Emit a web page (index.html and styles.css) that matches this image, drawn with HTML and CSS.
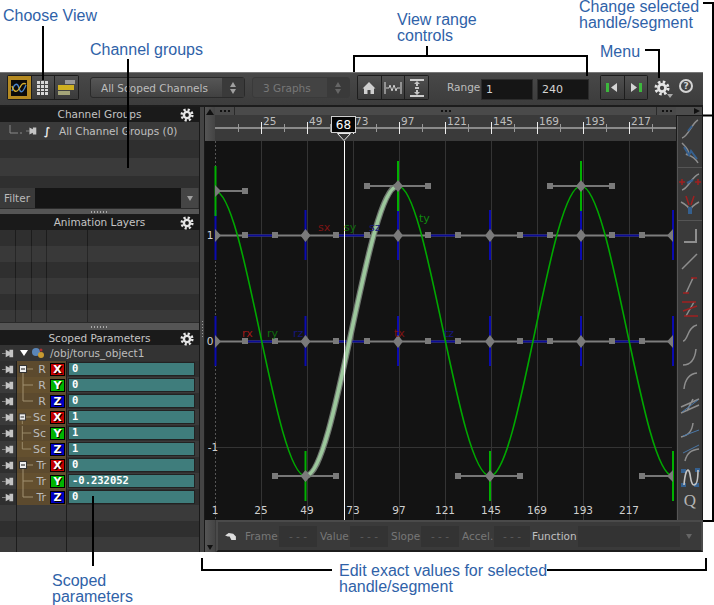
FILE: index.html
```html
<!DOCTYPE html>
<html lang="en">
<head>
<meta charset="utf-8">
<title>Animation Editor</title>
<link rel="stylesheet" href="styles.css">
</head>
<body>
<svg class="defs" width="0" height="0" aria-hidden="true">
  <defs>
    <symbol id="gear" viewBox="0 0 20 20">
      <circle cx="10" cy="10" r="7.600" fill="none" stroke="#e6e6e6" stroke-width="3.600" stroke-dasharray="3.100 2.870"/>
      <circle cx="10" cy="10" r="4.400" fill="none" stroke="#e6e6e6" stroke-width="3.400"/>
    </symbol>
    <symbol id="pin" viewBox="0 0 14 14">
      <path d="M0 7h4" stroke="#8a8a8a" stroke-width="1" fill="none"/>
      <path d="M4 3l4 2V3h4v8H8V9l-4 2z" fill="#c4c4c4"/>
    </symbol>
    <symbol id="t-minus" viewBox="0 0 18 16">
      <path d="M6 12v4M10 8h6" stroke="#a09070" fill="none"/>
      <rect x="2.500" y="4.500" width="7" height="7" fill="#eee" stroke="#333"/>
      <path d="M4 8h4" stroke="#111"/>
    </symbol>
    <symbol id="t-mid" viewBox="0 0 18 16">
      <path d="M6 0v16M6 8h10" stroke="#a09070" fill="none"/>
    </symbol>
    <symbol id="t-end" viewBox="0 0 18 16">
      <path d="M6 0v8h10" stroke="#a09070" fill="none"/>
    </symbol>
  </defs>
</svg>

<div class="stage">
  <div class="app">
    <div class="toolbar">
      <div class="btn-group first">
        <span class="tbtn active"><svg width="16" height="16" viewBox="0 0 16 16"><rect width="16" height="16" fill="#0b0b0b"/><path d="M1 11C4 1 7 4 8 8s3 7 7-3" fill="none" stroke="#4a86d0" stroke-width="1.300"/><path d="M1 6c2 7 5 6 7 3s3-7 7-5" fill="none" stroke="#d8b030" stroke-width="1.300"/></svg></span>
        <span class="tbtn"><svg width="14" height="14" viewBox="0 0 14 14"><path d="M1 0h3v3H1zM5 0h3v3H5zM9 0h3v3H9zM1 4h3v3H1zM5 4h3v3H5zM9 4h3v3H9zM1 8h3v2H1zM5 8h3v2H5zM9 8h3v2H9zM1 11h3v3H1zM5 11h3v3H5zM9 11h3v3H9z" fill="#d8d8d8"/></svg></span>
        <span class="tbtn"><svg width="17" height="16" viewBox="0 0 17 16"><rect x="7" y="0" width="10" height="4" fill="#999"/><rect x="0" y="5" width="16" height="5" fill="#cfb020"/><rect x="0" y="11" width="12" height="4" fill="#a4a478"/></svg></span>
      </div>
      <div class="combo main-combo"><span class="combo-text">All Scoped Channels</span><span class="combo-arrows"><i class="up"></i><i class="down"></i></span></div>
      <div class="combo dim-combo"><span class="combo-text">3 Graphs</span><span class="combo-arrows"><i class="up"></i><i class="down"></i></span></div>
      <div class="btn-group range-group">
        <span class="tbtn"><svg width="14" height="14" viewBox="0 0 14 14"><path d="M7 1l6.500 6.500H12V13H8.500V9h-3v4H2V7.500H.5z" fill="#cfcfcf"/></svg></span>
        <span class="tbtn"><svg width="20" height="16" viewBox="0 0 20 16"><path d="M2 2v12M18 2v12" stroke="#ddd"/><path d="M3 8h3l1-3 2 6 2-6 2 6 1-3h3" fill="none" stroke="#ccc"/></svg></span>
        <span class="tbtn"><svg width="16" height="20" viewBox="0 0 16 20"><path d="M1 2h14M1 18h14" stroke="#ccc" stroke-width="2"/><path d="M8 3l-3 3h2v2h2V6h2zM8 17l-3-3h2v-2h2v2h2zM6 9h4v2H6z" fill="#c4c4c4"/></svg></span>
      </div>
      <span class="range-label">Range</span>
      <span class="num-field">1</span>
      <span class="num-field">240</span>
      <div class="btn-group step-group">
        <span class="tbtn"><svg width="12" height="9" viewBox="0 0 12 9"><rect x="0" y="0" width="3" height="9" fill="#3cb83c"/><path d="M11 0v9L5 4.500z" fill="#d4d4d4"/></svg></span>
        <span class="tbtn"><svg width="12" height="9" viewBox="0 0 12 9"><path d="M1 0v9l6-4.500z" fill="#d4d4d4"/><rect x="9" y="0" width="3" height="9" fill="#3cb83c"/></svg></span>
      </div>
      <svg class="menu-gear" width="16" height="16"><use href="#gear"/></svg>
      <i class="menu-caret"></i>
      <span class="help">?</span>
    </div>

    <div class="workspace">
      <div class="left">
        <div class="phead"><span>Channel Groups</span><svg class="hgear" width="14" height="14"><use href="#gear"/></svg></div>
        <div class="cg-row r-a">
          <svg class="cg-tree" width="16" height="12" viewBox="0 0 16 12"><path d="M2 0v8h8" stroke="#888" fill="none"/><path d="M12 8h2" stroke="#888"/></svg>
          <svg class="cg-pin" width="12" height="12"><use href="#pin"/></svg>
          <span class="cg-int">∫</span>
          <span class="cg-name">All Channel Groups (0)</span>
        </div>
        <div class="cg-row r-b"></div>
        <div class="cg-row r-a"></div>
        <div class="cg-row short r-b"></div>
        <div class="filter"><span class="filter-label">Filter</span><span class="filter-input"></span><span class="filter-btn"><i class="down"></i></span></div>
        <div class="divider"><span class="grip"></span></div>
        <div class="phead"><span>Animation Layers</span><svg class="hgear" width="14" height="14"><use href="#gear"/></svg></div>
        <div class="al-rows">
          <div class="al-row r-b"></div><div class="al-row r-a"></div><div class="al-row r-b"></div><div class="al-row r-a"></div><div class="al-row r-b"></div><div class="al-row r-a short"></div>
        </div>
        <div class="divider wide"><span class="grip"></span></div>
        <div class="phead low"><span>Scoped Parameters</span><svg class="hgear" width="14" height="14"><use href="#gear"/></svg></div>
        <div class="prow obj">
          <span class="ppin"><svg width="13" height="13"><use href="#pin"/></svg></span>
          <i class="tri"></i>
          <svg class="objicon" width="14" height="14" viewBox="0 0 14 14"><circle cx="5" cy="6" r="4" fill="#5a86b8"/><circle cx="10" cy="9" r="3" fill="#c89a30"/><circle cx="10" cy="4" r="1.500" fill="#b03030"/></svg>
          <span class="objpath">/obj/torus_object1</span>
        </div>
        <div class="prow r-b"><span class="ppin"><svg width="13" height="13"><use href="#pin"/></svg></span><span class="ptree"><svg width="18" height="16"><use href="#t-minus"/></svg><span class="plabel">R</span><b class="badge bx">X</b></span><span class="pcell"><span class="pfield">0</span></span></div>
        <div class="prow r-a"><span class="ppin"><svg width="13" height="13"><use href="#pin"/></svg></span><span class="ptree"><svg width="18" height="16"><use href="#t-mid"/></svg><span class="plabel">R</span><b class="badge by">Y</b></span><span class="pcell"><span class="pfield">0</span></span></div>
        <div class="prow r-b"><span class="ppin"><svg width="13" height="13"><use href="#pin"/></svg></span><span class="ptree"><svg width="18" height="16"><use href="#t-end"/></svg><span class="plabel">R</span><b class="badge bz">Z</b></span><span class="pcell"><span class="pfield">0</span></span></div>
        <div class="prow r-a"><span class="ppin"><svg width="13" height="13"><use href="#pin"/></svg></span><span class="ptree"><svg width="18" height="16"><use href="#t-minus"/></svg><span class="plabel">Sc</span><b class="badge bx">X</b></span><span class="pcell"><span class="pfield">1</span></span></div>
        <div class="prow r-b"><span class="ppin"><svg width="13" height="13"><use href="#pin"/></svg></span><span class="ptree"><svg width="18" height="16"><use href="#t-mid"/></svg><span class="plabel">Sc</span><b class="badge by">Y</b></span><span class="pcell"><span class="pfield">1</span></span></div>
        <div class="prow r-a"><span class="ppin"><svg width="13" height="13"><use href="#pin"/></svg></span><span class="ptree"><svg width="18" height="16"><use href="#t-end"/></svg><span class="plabel">Sc</span><b class="badge bz">Z</b></span><span class="pcell"><span class="pfield">1</span></span></div>
        <div class="prow r-b"><span class="ppin"><svg width="13" height="13"><use href="#pin"/></svg></span><span class="ptree"><svg width="18" height="16"><use href="#t-minus"/></svg><span class="plabel">Tr</span><b class="badge bx">X</b></span><span class="pcell"><span class="pfield">0</span></span></div>
        <div class="prow r-a"><span class="ppin"><svg width="13" height="13"><use href="#pin"/></svg></span><span class="ptree"><svg width="18" height="16"><use href="#t-mid"/></svg><span class="plabel">Tr</span><b class="badge by">Y</b></span><span class="pcell"><span class="pfield">-0.232052</span></span></div>
        <div class="prow r-b"><span class="ppin"><svg width="13" height="13"><use href="#pin"/></svg></span><span class="ptree"><svg width="18" height="16"><use href="#t-end"/></svg><span class="plabel">Tr</span><b class="badge bz">Z</b></span><span class="pcell"><span class="pfield">0</span></span></div>
        <div class="prow empty r-a"><span class="ppin"></span><span class="ptree blank"></span></div>
        <div class="prow empty r-b"><span class="ppin"></span><span class="ptree blank"></span></div>
        <div class="prow empty tail r-a"><span class="ppin"></span><span class="ptree blank"></span></div>
      </div>

      <div class="splitter"><span class="vgrip"></span></div>

      <div class="graph">
        <div class="graph-upper">
          <div class="canvas">
            <div class="canvas-top">
              <div class="vthumb top"><i class="tri-up"></i></div>
              <div class="ruler-col">
                <div class="hscroll"><span class="hs-start"><span class="grip short"></span></span><span class="hs-mid"><span class="grip short"></span></span><span class="hs-end"><span class="grip short"></span></span></div>
                <svg class="ruler" width="461" height="26" viewBox="215 115 461 26">
                  <rect x="215" y="115" width="461" height="26" fill="#3a3a3a"/>
                  <path d="M215 128H676" stroke="#8a8a8a" stroke-width="2"/>
                  <path class="minor" d="M238.500 124v8M284.500 124v8M330.500 124v8M376.500 124v8M422.500 124v8M468.500 124v8M514.500 124v8M560.500 124v8M606.500 124v8M652.500 124v8"/>
                  <path class="major" d="M261.500 122v12M307.500 122v12M353.500 122v12M399.500 122v12M445.500 122v12M491.500 122v12M537.500 122v12M583.500 122v12M629.500 122v12"/>
                  <g class="ruler-nums">
                    <text x="263" y="125">25</text><text x="309" y="125">49</text><text x="355" y="125">73</text><text x="401" y="125">97</text><text x="447" y="125">121</text><text x="493" y="125">145</text><text x="539" y="125">169</text><text x="585" y="125">193</text><text x="631" y="125">217</text>
                  </g>
                  <rect x="331.500" y="116.500" width="24" height="16" fill="#050505" stroke="#cfcfcf"/>
                  <text class="flag-num" x="343.500" y="129" text-anchor="middle">68</text>
                  <path d="M337.500 133.500h13l-6.500 7z" fill="#333" stroke="#e8e8e8"/>
                </svg>
              </div>
            </div>
            <svg class="plot" width="471" height="379" viewBox="205 141 471 379">
              <rect x="205" y="141" width="471" height="379" fill="#131313"/>
              <path class="grid" d="M261.500 141V520M307.500 141V520M353.500 141V520M399.500 141V520M445.500 141V520M491.500 141V520M537.500 141V520M583.500 141V520M629.500 141V520M215 447.500H672"/>
              <path class="axis" d="M215.500 141V520"/>
              <path class="flat" d="M215 235.500H672M215 341.500H672"/>
              <path class="blue-seg" d="M245 235.500H275M336 235.500H367M428 235.500H458M520 235.500H550M612 235.500H642M245 341.500H275M336 341.500H367M428 341.500H458M520 341.500H550M612 341.500H642"/>
              <path class="blue-v" d="M215.500 210V260M305.500 210V260M398 210V260M490 210V260M581 210V260M673 210V260M215.500 316V366M305.500 316V366M398 316V366M490 316V366M581 316V366M673 316V366"/>
              <path class="green-v" d="M215.500 166V216M398 161V211M581 161V211M305.500 451V501M490 451V501M673 451V501"/>
              <path class="handle-line" d="M215 191H245M367 186H428M550 186H612M275 476H336M458 476H520M642 476H672"/>
              <path class="curve" d="M215 191C245 191 275 476 305.500 476C336 476 367 186 398 186C428 186 458 476 490 476C520 476 550 186 581 186C612 186 642 476 673 476"/>
              <path class="active-edge" d="M305.500 476C336 476 367 186 398 186"/>
              <path class="active-core" d="M305.500 476C336 476 367 186 398 186"/>
              <path class="now" d="M344.500 141V520"/>
              <g class="squares">
                <rect x="242" y="232" width="6" height="6"/><rect x="272" y="232" width="6" height="6"/><rect x="333" y="232" width="6" height="6"/><rect x="364" y="232" width="6" height="6"/><rect x="425" y="232" width="6" height="6"/><rect x="455" y="232" width="6" height="6"/><rect x="517" y="232" width="6" height="6"/><rect x="547" y="232" width="6" height="6"/><rect x="609" y="232" width="6" height="6"/><rect x="639" y="232" width="6" height="6"/>
                <rect x="242" y="338" width="6" height="6"/><rect x="272" y="338" width="6" height="6"/><rect x="333" y="338" width="6" height="6"/><rect x="364" y="338" width="6" height="6"/><rect x="425" y="338" width="6" height="6"/><rect x="455" y="338" width="6" height="6"/><rect x="517" y="338" width="6" height="6"/><rect x="547" y="338" width="6" height="6"/><rect x="609" y="338" width="6" height="6"/><rect x="639" y="338" width="6" height="6"/>
                <rect x="242" y="188" width="6" height="6"/><rect x="364" y="183" width="6" height="6"/><rect x="425" y="183" width="6" height="6"/><rect x="547" y="183" width="6" height="6"/><rect x="609" y="183" width="6" height="6"/>
                <rect x="272" y="473" width="6" height="6"/><rect x="333" y="473" width="6" height="6"/><rect x="455" y="473" width="6" height="6"/><rect x="517" y="473" width="6" height="6"/><rect x="639" y="473" width="6" height="6"/>
                <path d="M215 185l6 6-6 6zM215 229l6 6.500-6 6.500zM215 335l6 6.500-6 6.500zM673 229l-6 6.500 6 6.500zM673 335l-6 6.500 6 6.500zM673 470l-6 6 6 6z"/>
                <path d="M305.500 229l5 6.500-5 6.500-5-6.500zM398 229l5 6.500-5 6.500-5-6.500zM490 229l5 6.500-5 6.500-5-6.500zM581 229l5 6.500-5 6.500-5-6.500zM305.500 335l5 6.500-5 6.500-5-6.500zM398 335l5 6.500-5 6.500-5-6.500zM490 335l5 6.500-5 6.500-5-6.500zM581 335l5 6.500-5 6.500-5-6.500zM398 180l5 6-5 6-5-6zM581 180l5 6-5 6-5-6zM305.500 470l5 6-5 6-5-6zM490 470l5 6-5 6-5-6z"/>
              </g>
              <g class="curve-names">
                <text class="red" x="318" y="231">sx</text><text class="grn" x="344" y="231">sy</text><text class="blu" x="369" y="231">sz</text><text class="grn2" x="419" y="222">ty</text>
                <text class="red2" x="242" y="337">rx</text><text class="grn" x="267" y="337">ry</text><text class="blu" x="293" y="337">rz</text><text class="red" x="394" y="337">tx</text><text class="blu" x="444" y="337">tz</text>
              </g>
              <g class="y-nums">
                <text x="210" y="239" text-anchor="middle">1</text><text x="210" y="345" text-anchor="middle">0</text><text x="213" y="451" text-anchor="middle">-1</text>
              </g>
              <g class="x-nums" text-anchor="middle">
                <text x="215" y="514">1</text><text x="261" y="514">25</text><text x="307" y="514">49</text><text x="353" y="514">73</text><text x="399" y="514">97</text><text x="445" y="514">121</text><text x="491" y="514">145</text><text x="537" y="514">169</text><text x="583" y="514">193</text><text x="629" y="514">217</text>
              </g>
            </svg>
          </div>
          <div class="tools">
            <div class="tools-head"><i class="tri-right"></i></div>
            <div class="tools-list">
              <svg class="tool" width="24" height="24" viewBox="0 0 24 24"><path d="M4 21C10 20 14 6 20 3" class="ic"/><path d="M10 14l4-5" class="ic-b"/></svg>
              <svg class="tool" width="24" height="24" viewBox="0 0 24 24"><path d="M4 2C10 8 12 12 9 13s6 0 11 9" class="ic"/><path d="M6 6l5 8 2-4 6 8" class="ic-b"/></svg>
              <span class="tool-sep"></span>
              <svg class="tool" width="24" height="24" viewBox="0 0 24 24"><path d="M4 20C10 19 14 6 21 4" class="ic"/><path d="M1 12h6M17 12h6M4 9v6M20 9v6" class="ic-r"/><path d="M9 13l6-3" class="ic-b"/></svg>
              <svg class="tool" width="24" height="24" viewBox="0 0 24 24"><path d="M3 8c4 2 8 5 9 9 1-4 5-7 9-9" class="ic"/><path d="M8 2l3 9M16 2l-3 9" class="ic-r"/><path d="M10 13h4v7h-4z" class="ic-bf"/></svg>
              <span class="tool-sep wide"></span>
              <svg class="tool" width="24" height="24" viewBox="0 0 24 24"><path d="M18 4v13H6" class="ic2"/></svg>
              <svg class="tool" width="24" height="24" viewBox="0 0 24 24"><path d="M4 20L19 5" class="ic"/></svg>
              <svg class="tool" width="24" height="24" viewBox="0 0 24 24"><path d="M8 20L15 5" class="ic"/><path d="M5 20h6M13 5h6" class="ic-r"/></svg>
              <svg class="tool" width="24" height="24" viewBox="0 0 24 24"><path d="M8 19L16 5" class="ic"/><path d="M4 5h14M6 19h14" class="ic-r"/><path d="M5 14L19 9" class="ic-r"/></svg>
              <svg class="tool" width="24" height="24" viewBox="0 0 24 24"><path d="M5 20C10 20 9 6 19 4" class="ic"/></svg>
              <svg class="tool" width="24" height="24" viewBox="0 0 24 24"><path d="M5 20C13 20 17 14 18 4" class="ic"/></svg>
              <svg class="tool" width="24" height="24" viewBox="0 0 24 24"><path d="M6 20C7 10 11 5 19 4" class="ic"/></svg>
              <svg class="tool" width="24" height="24" viewBox="0 0 24 24"><path d="M3 14L21 6M3 20L21 12M9 18C11 13 13 10 15 6" class="ic"/><path d="M4 19L20 7" class="ic-bt"/></svg>
              <svg class="tool" width="24" height="24" viewBox="0 0 24 24"><path d="M3 20C11 18 14 14 15 6" class="ic"/><path d="M5 19L21 13" class="ic-bt"/></svg>
              <svg class="tool" width="24" height="24" viewBox="0 0 24 24"><path d="M7 20C9 12 13 9 21 8" class="ic"/><path d="M5 12L21 4" class="ic-bt"/></svg>
              <svg class="tool" width="24" height="24" viewBox="0 0 24 24"><path d="M3 4h5v4H3zM17 3h5v4h-5zM3 18h5v4H3zM16 18h5v4h-5z" class="ic-bf"/><path d="M6 20C7 8 9 3 11 6s1 14 5 14 4-12 4-15" class="ic-w"/></svg>
              <span class="tool-q">Q</span>
            </div>
          </div>
        </div>
        <div class="graph-lower">
          <div class="vthumb bottom"><i class="tri-down"></i></div>
          <div class="value-bar">
            <svg class="undo" width="11" height="9" viewBox="0 0 12 10"><path d="M0 4l4-3 5 1 3 3v4H7L5 5H3z" fill="#ddd"/></svg>
            <span class="vb-label l-frame">Frame</span><span class="vb-field">- - -</span>
            <span class="vb-label">Value</span><span class="vb-field">- - -</span>
            <span class="vb-label">Slope</span><span class="vb-field">- - -</span>
            <span class="vb-label l-accel">Accel.</span><span class="vb-field narrow">- - -</span>
            <span class="vb-label on">Function</span>
            <span class="vb-func"><span class="vb-func-btn"><i class="down"></i></span></span>
          </div>
        </div>
      </div>
    </div>
  </div>

  <svg class="notes" width="714" height="605" viewBox="0 0 714 605">
    <path class="lead" d="M43 26V80M128 59V168M93 496V566"/>
    <path class="lead" d="M354 72V56H587V76M427 46V56"/>
    <path class="lead" d="M645 50H659V78"/>
    <path class="lead" d="M703 3H713V521H703M703 115.500H713"/>
    <path class="lead" d="M202 558V570H332M547 570H706V558"/>
    <text x="3" y="21">Choose View</text>
    <text x="90" y="55">Channel groups</text>
    <text x="397" y="25">View range</text>
    <text x="397" y="41">controls</text>
    <text x="579" y="12">Change selected</text>
    <text x="579" y="28">handle/segment</text>
    <text x="600" y="57">Menu</text>
    <text x="52" y="586">Scoped</text>
    <text x="52" y="602">parameters</text>
    <text x="339" y="576">Edit exact values for selected</text>
    <text x="339" y="592">handle/segment</text>
  </svg>
</div>
</body>
</html>
```
FILE: styles.css
```css
* { box-sizing: border-box; }
html, body { margin: 0; padding: 0; background: #fff; }
.defs { position: absolute; }
.stage { position: relative; width: 714px; height: 605px; overflow: hidden; padding-top: 72px; font: 10.5px "DejaVu Sans", sans-serif; color: #bdbdbd; }
.app { width: 703px; height: 480px; display: flex; flex-direction: column; background: #3a3a3a; border-radius: 0 0 2px 2px; }

/* toolbar */
.toolbar { height: 35px; flex: none; display: flex; align-items: flex-start; padding: 2px 0 0 7px; background: linear-gradient(#484848, #3c3c3c); border-top: 1px solid #777; border-bottom: 2px solid #1c1c1c; }
.btn-group { display: flex; height: 25px; background: #1d1d1d; padding: 1px; border-radius: 2px; gap: 1px; }
.first, .range-group { width: 72px; }
.step-group { width: 48px; }
.tbtn { flex: 1; height: 23px; display: flex; align-items: center; justify-content: center; background: linear-gradient(#505050, #3a3a3a); }
.tbtn.active { background: #b58a22; }
.combo { height: 21px; margin-top: 2px; display: flex; align-items: center; border-radius: 3px; border: 1px solid #2a2a2a; background: linear-gradient(#565656, #414141); }
.combo-text { flex: 1; }
.main-combo { width: 155px; margin-left: 11px; padding-left: 10px; color: #bdbdbd; }
.dim-combo { width: 98px; margin-left: 7px; padding-left: 10px; color: #777; background: #434343; border-color: #3a3a3a; }
.combo-arrows { width: 22px; height: 19px; display: flex; flex-direction: column; gap: 2px; align-items: center; justify-content: center; background: #3a3a3a; }
.up, .down, .tri-up, .tri-down, .tri-right, .menu-caret { display: block; width: 0; height: 0; }
.up { border: 3.500px solid transparent; border-top: 0; border-bottom: 5px solid #a0a0a0; }
.down { border: 3.500px solid transparent; border-bottom: 0; border-top: 5px solid #a0a0a0; }
.dim-combo .up { border-bottom-color: #666; }
.dim-combo .down { border-top-color: #666; }
.range-group { margin-left: 7px; }
.range-label { margin-left: 18px; margin-top: 6px; width: 34px; }
.num-field { width: 52px; height: 21px; margin-top: 4px; margin-right: 4px; padding: 3px 0 0 4px; background: #151515; color: #d4d4d4; font-size: 11px; border: 1px solid #2c2c2c; }
.step-group { margin-left: 7px; }
.menu-gear { margin: 5px 0 0 6px; }
.menu-caret { margin: 19px 0 0 -3px; border: 3px solid transparent; border-bottom: 0; border-top: 4px solid #aaa; }
.help { width: 14px; height: 14px; margin: 4px 0 0 6px; border-radius: 50%; border: 2px solid #d4d4d4; color: #d4d4d4; font-size: 9px; font-weight: bold; line-height: 10px; text-align: center; }

/* layout */
.workspace { flex: 1; display: flex; min-height: 0; }
.left { width: 199px; flex: none; display: flex; flex-direction: column; background: #2f2f2f; }
.splitter { width: 6px; flex: none; display: flex; align-items: center; justify-content: center; background: #444; border-left: 1px solid #191919; border-right: 1px solid #191919; }
.vgrip { width: 1px; height: 18px; background: repeating-linear-gradient(#999 0 1px, transparent 1px 3px); }
.graph { flex: 1; min-width: 0; display: flex; flex-direction: column; }

/* left panels */
.phead { height: 15px; flex: none; display: flex; align-items: center; justify-content: center; position: relative; background: #1a1a1a; color: #c4c4c4; line-height: 15px; }
.phead.low { height: 14px; }
.hgear { position: absolute; right: 5px; top: 1px; }
.r-a { background: #3a3a3a; }
.r-b { background: #2f2f2f; }
.cg-row { height: 18px; display: flex; align-items: center; }
.cg-row.short { height: 12px; }
.cg-tree { margin-left: 8px; }
.cg-pin { margin-left: 2px; }
.cg-int { margin: 0 7px 0 6px; color: #eee; font-weight: bold; width: 8px; }
.cg-name { color: #c0c0c0; }
.filter { height: 20px; flex: none; display: flex; align-items: center; background: #3a3a3a; padding-left: 4px; }
.filter-label { width: 31px; color: #bbb; }
.filter-input { width: 146px; height: 20px; background: #151515; }
.filter-btn { width: 17px; height: 20px; display: flex; align-items: center; justify-content: center; background: #454545; }
.divider { height: 7px; flex: none; display: flex; align-items: center; justify-content: center; background: #555; border-bottom: 1px solid #1b1b1b; border-top: 1px solid #2a2a2a; }
.divider.wide { height: 9px; }
.grip { width: 18px; height: 2px; background: repeating-linear-gradient(90deg, #aaa 0 1px, transparent 1px 3px); }
.grip.short { width: 10px; background: repeating-linear-gradient(90deg, #111 0 2px, transparent 2px 4px); }
.al-rows { flex: none; background-color: #2f2f2f; background-image: linear-gradient(90deg, transparent 15px, #1c1c1c 15px 16px, transparent 16px 31px, #1c1c1c 31px 32px, transparent 32px 46px, #1c1c1c 46px 47px, transparent 47px 87px, #1c1c1c 87px 88px, transparent 88px); }
.al-row { height: 16px; }
.al-rows .r-a { background-color: rgba(255, 255, 255, 0.05); }
.al-rows .r-b { background-color: transparent; }
.al-row.short { height: 12px; }

/* parameter rows */
.prow { height: 16px; flex: none; display: flex; align-items: center; }
.prow.obj { background: #333; color: #c4c4c4; }
.prow.tail { flex: 1; height: auto; align-items: stretch; }
.prow.empty { align-items: stretch; }
.ppin { width: 17px; height: 100%; flex: none; display: flex; align-items: center; padding-left: 2px; border-right: 1px solid #1d1d1d; }
.prow.obj .ppin { border-right: 0; }
.ptree { width: 50px; height: 100%; flex: none; display: flex; align-items: center; background: #5c4a2e; border-right: 1px solid #1d1d1d; padding-right: 1px; }
.prow.r-a .ptree { background: #64502f; }
.ptree.blank, .prow.r-a .ptree.blank { background: transparent; }
.plabel { flex: 1; text-align: right; padding-right: 4px; color: #bbb; font-size: 11px; }
.badge { width: 15px; height: 13px; flex: none; border: 1px solid #000; color: #fff; font-size: 11px; line-height: 11px; text-align: center; text-shadow: 1px 1px 0 #000; }
.bx { background: #c40000; }
.by { background: #00b400; }
.bz { background: #0000c4; }
.pcell { flex: 1; padding: 0 2px; }
.pfield { display: block; width: 125px; height: 12px; padding-left: 3px; background: #3f7d7c; outline: 1px solid #222; color: #fff; font: bold 10.5px/11px "DejaVu Sans Mono", monospace; }
.tri { width: 0; height: 0; margin: 0 3px; border: 4px solid transparent; border-bottom: 0; border-top: 6px solid #fff; }
.objicon { margin-right: 5px; }
.objpath { color: #bdbdbd; }

/* graph */
.graph-upper { flex: 1; display: flex; min-height: 0; }
.canvas { width: 471px; flex: none; display: flex; flex-direction: column; }
.canvas-top { display: flex; height: 34px; flex: none; }
.vthumb { width: 10px; flex: none; background: linear-gradient(90deg, #555, #444); display: flex; justify-content: center; }
.vthumb.top { align-items: flex-start; padding-top: 2px; }
.vthumb.bottom { align-items: flex-end; padding-bottom: 2px; }
.tri-up { border: 4px solid transparent; border-top: 0; border-bottom: 6px solid #111; }
.tri-down { border: 3px solid transparent; border-bottom: 0; border-top: 5px solid #111; }
.tri-right { border: 3px solid transparent; border-right: 0; border-left: 6px solid #111; }
.ruler-col { width: 461px; }
.hscroll { height: 8px; display: flex; background: #2a2a2a; }
.hs-start, .hs-mid, .hs-end { display: flex; align-items: center; justify-content: center; background: #4a4a4a; }
.hs-start { width: 19px; margin-right: 1px; }
.hs-mid { flex: 1; margin-right: 1px; }
.hs-end { width: 19px; }
.ruler, .plot { display: block; }
.minor { stroke: #999; fill: none; }
.major { stroke: #eee; fill: none; }
.ruler-nums text { fill: #bdbdbd; font-size: 10.5px; }
.flag-num { fill: #fff; font-size: 12px; }
.grid { stroke: #343434; fill: none; }
.axis { stroke: #555; stroke-dasharray: 2 2; fill: none; }
.flat { stroke: #7d7d7d; stroke-width: 2; fill: none; }
.blue-seg { stroke: #0b0b98; stroke-width: 2; fill: none; }
.blue-v { stroke: #0a0ab0; stroke-width: 2; fill: none; }
.green-v { stroke: #00b000; stroke-width: 2; fill: none; }
.handle-line { stroke: #777; stroke-width: 2; fill: none; }
.curve { stroke: #00a800; stroke-width: 1.600; fill: none; }
.active-edge { stroke: #6f776f; stroke-width: 6; fill: none; }
.active-core { stroke: #9cc79c; stroke-width: 3.600; fill: none; }
.now { stroke: #fff; stroke-width: 1; fill: none; }
.squares { fill: #7a7a7a; }
.curve-names text { font-size: 11px; }
.red { fill: #7e1414; }
.red2 { fill: #a01818; }
.grn { fill: #0e6e0e; }
.grn2 { fill: #0f8a0f; }
.blu { fill: #16167a; }
.y-nums text, .x-nums text { fill: #d0d0d0; font-size: 10.5px; }
.tools { width: 27px; flex: none; display: flex; flex-direction: column; background: #1a1a1a; padding-right: 1px; }
.tools-head { height: 8px; flex: none; display: flex; justify-content: flex-end; align-items: center; padding-right: 2px; background: #4d4d4d; }
.tools-list { flex: 1; margin-top: 1px; margin-left: 1px; display: flex; flex-direction: column; align-items: center; background: #3a3a3a; padding-top: 1px; border-left: 1px solid #555; }
.tool { flex: none; }
.tool-sep { width: 100%; height: 5px; flex: none; background: linear-gradient(#3a3a3a 2px, #555 2px 3px, #3a3a3a 3px); }
.tool-sep.wide { height: 7px; }
.ic { fill: none; stroke: #8e8e8e; stroke-width: 1.500; }
.ic2 { fill: none; stroke: #8e8e8e; stroke-width: 2; }
.ic-b { fill: none; stroke: #35608f; stroke-width: 2; }
.ic-bt { fill: none; stroke: #4a78a8; stroke-width: 1; }
.ic-bf { fill: #35608f; }
.ic-r { fill: none; stroke: #a02020; stroke-width: 1.500; }
.ic-w { fill: none; stroke: #c4c4c4; stroke-width: 1.600; }
.tool-q { font: 17px/24px "Liberation Serif", serif; color: #b4b4b4; }
.graph-lower { height: 32px; flex: none; display: flex; }
.vthumb.bottom { height: 32px; }
.value-bar { flex: 1; margin-left: 1px; padding-right: 3px; display: flex; align-items: center; background: #3a3a3a; border: 2px solid #4a4a4a; border-bottom-color: #1c1c1c; color: #777; }
.undo { margin: 0 9px 0 7px; flex: none; }
.vb-label { width: 30px; white-space: nowrap; }
.l-frame { width: 34px; }
.l-accel { width: 32px; }
.vb-label.on { color: #c0c0c0; width: 46px; }
.vb-field { width: 38px; height: 21px; margin-right: 3px; background: #333; color: #5c5c5c; text-align: center; line-height: 21px; }
.vb-field.narrow { width: 36px; margin-right: 2px; }
.vb-func { flex: 1; height: 21px; display: flex; justify-content: flex-end; background: #333; }
.vb-func-btn { width: 18px; display: flex; align-items: center; justify-content: center; background: #3a3a3a; }
.vb-func-btn .down { border-top-color: #666; }

/* annotations */
.notes { position: absolute; left: 0; top: 0; pointer-events: none; }
.notes text { font: 16px "Liberation Sans", Arial, sans-serif; fill: #2f62a8; }
.lead { fill: none; stroke: #000; stroke-width: 2; }
```
